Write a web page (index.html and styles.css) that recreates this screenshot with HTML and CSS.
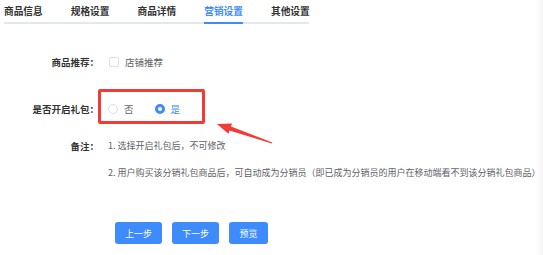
FILE: index.html
```html
<html>
<head>
    <title>营销设置</title>
    <link rel="stylesheet" href="styles.css">
</head>
<body>
    <div class="page">
        <div class="tabs">
            <div class="tab">商品信息</div>
            <div class="tab">规格设置</div>
            <div class="tab">商品详情</div>
            <div class="tab active">营销设置</div>
            <div class="tab">其他设置</div>
        </div>
        <div class="form">
            <div class="row row-first">
                <div class="label">商品推荐：</div>
                <div class="field">
                    <span class="checkbox"></span>
                    <span class="option">店铺推荐</span>
                </div>
            </div>
            <div class="row row-gift">
                <div class="label">是否开启礼包：</div>
                <div class="field">
                    <span class="radio"></span>
                    <span class="option">否</span>
                    <span class="radio checked"></span>
                    <span class="option selected">是</span>
                </div>
            </div>
            <div class="row row-note">
                <div class="label">备注：</div>
                <div class="notes">
                    <p>1. 选择开启礼包后，不可修改</p>
                    <p>2. 用户购买该分销礼包商品后，可自动成为分销员（即已成为分销员的用户在移动端看不到该分销礼包商品）</p>
                </div>
            </div>
            <div class="actions">
                <button class="btn">上一步</button>
                <button class="btn">下一步</button>
                <button class="btn btn-small">预览</button>
            </div>
        </div>
        <!-- screenshot annotation -->
        <div class="mark-box"></div>
        <svg class="mark-arrow" width="543" height="255" viewBox="0 0 543 255">
            <polygon points="217,124 232,123.4 231,126.6 272.3,142.4 271.8,143.6 229.5,130.5 228.4,133.8" fill="#f23a36"/>
        </svg>
    </div>
</body>
</html>
```

FILE: styles.css
```css
body {
    margin: 0;
    font-family: "Noto Sans CJK SC", "Noto Sans", sans-serif;
    font-size: 9.5px;
    color: #333;
    background: #fff;
}

.page {
    position: relative;
    width: 543px;
    height: 255px;
    overflow: hidden;
    background: linear-gradient(to right, #fff 535px, #f4f4f6 543px);
}

.tabs {
    display: flex;
    gap: 28px;
    width: 305px;
    margin-left: 4px;
    border-bottom: 2px solid #e4e7ed;
}

.tab {
    width: 39px;
    padding: 5px 0 5px;
    line-height: 12px;
    font-size: 9.7px;
    font-weight: 600;
    white-space: nowrap;
    color: #333;
    text-align: center;
    margin-bottom: -2px;
    border-bottom: 2px solid transparent;
}

.tab.active {
    color: #3d8bfd;
    border-bottom-color: #3d8bfd;
}

.form {
    padding-top: 28px;
}

.row {
    display: flex;
    align-items: flex-start;
    line-height: 20px;
}

.row-gift {
    margin-top: 27px;
}

.row-note {
    margin-top: 17px;
}

.label {
    width: 108px;
    padding-right: 9px;
    box-sizing: border-box;
    text-align: right;
    font-weight: 600;
    white-space: nowrap;
    color: #333;
    flex-shrink: 0;
}

.field {
    display: flex;
    align-items: center;
    height: 20px;
}

.checkbox {
    width: 8px;
    height: 8px;
    border: 1px solid #dcdfe6;
    border-radius: 2px;
    margin-left: 1px;
}

.option {
    margin-left: 6px;
    color: #606266;
}

.option.selected {
    color: #3d8bfd;
}

.radio {
    width: 8px;
    height: 8px;
    border: 1px solid #dcdfe6;
    border-radius: 50%;
    box-sizing: content-box;
}

.option + .radio {
    margin-left: 21px;
}

.radio.checked {
    width: 4px;
    height: 4px;
    border: 3px solid #3d8bfd;
    background: #fff;
}

.notes {
    font-size: 9px;
}

.notes p {
    margin: 0 0 7px;
    color: #606266;
    white-space: nowrap;
}

.actions {
    display: flex;
    gap: 10px;
    margin-top: 32px;
    padding-left: 115px;
}

.btn {
    width: 47px;
    height: 22px;
    border: none;
    border-radius: 3px;
    background: #3d8bfd;
    color: #fff;
    font-family: inherit;
    font-size: 9px;
    padding: 0;
}

.btn-small {
    width: 39px;
}

.mark-box {
    position: absolute;
    left: 98px;
    top: 89px;
    width: 101px;
    height: 29px;
    border: 3px solid #f23a36;
    border-radius: 2px;
}

.mark-arrow {
    position: absolute;
    left: 0;
    top: 0;
    pointer-events: none;
}
```
